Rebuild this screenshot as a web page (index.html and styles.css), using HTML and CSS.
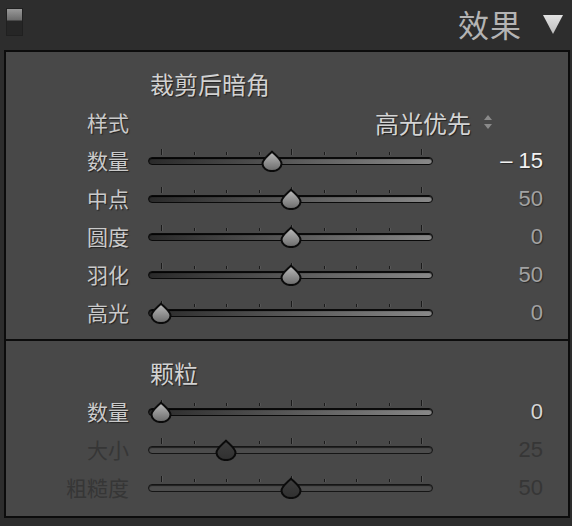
FILE: index.html
```html
<!DOCTYPE html>
<html lang="zh">
<head>
<meta charset="utf-8">
<link rel="stylesheet" href="styles.css">
</head>
<body>
<header class="hdr">
  <div class="toggle"></div>
  <div class="hdr-right">
    <span class="hdr-title">效果</span>
    <svg class="hdr-tri" width="22" height="22" viewBox="0 0 22 22"><defs><linearGradient id="tg" x1="0" y1="0" x2="0" y2="1"><stop offset="0" stop-color="#e2e2e2"/><stop offset="1" stop-color="#bdbdbd"/></linearGradient></defs><polygon points="1,2 21,2 11,21" fill="url(#tg)"/></svg>
  </div>
</header>

<svg width="0" height="0" class="defs">
  <defs>
    <linearGradient id="thumbOn" x1="0" y1="0" x2="0" y2="1"><stop offset="0" stop-color="#bdbdbd"/><stop offset="1" stop-color="#6a6a6a"/></linearGradient>
    <linearGradient id="thumbOff" x1="0" y1="0" x2="0" y2="1"><stop offset="0" stop-color="#3e3e3e"/><stop offset="1" stop-color="#303030"/></linearGradient>
    <symbol id="thumb" viewBox="0 0 24 22"><path d="M12 1.5 C13.5 3.8 21.5 9 21.5 13.8 A9.5 7.3 0 0 1 2.5 13.8 C2.5 9 10.5 3.8 12 1.5 Z" stroke="#0b0b0b" stroke-width="2" stroke-linejoin="round"/></symbol>
  </defs>
</svg>

<main class="panel">
  <section class="sec sec-vignette">
    <div class="sec-title">裁剪后暗角</div>
    <div class="row">
      <span class="lbl">样式</span>
      <span class="option">高光优先
        <svg class="updown" width="10" height="18" viewBox="0 0 10 18"><polygon points="5,2 9,7 1,7" fill="#8a8a8a"/><polygon points="1,11 9,11 5,16" fill="#8a8a8a"/></svg>
      </span>
    </div>
    <div class="row">
      <span class="lbl">数量</span>
      <div class="slider">
        <div class="ticks"><i class="t big"></i><i class="t"></i><i class="t"></i><i class="t"></i><i class="t big"></i><i class="t"></i><i class="t"></i><i class="t"></i><i class="t big"></i></div>
        <div class="track"></div>
        <div class="rail"><svg class="thumb on" style="left:42.5%"><use href="#thumb"/></svg></div>
      </div>
      <span class="val hot">– 15</span>
    </div>
    <div class="row">
      <span class="lbl">中点</span>
      <div class="slider">
        <div class="ticks"><i class="t big"></i><i class="t"></i><i class="t"></i><i class="t"></i><i class="t big"></i><i class="t"></i><i class="t"></i><i class="t"></i><i class="t big"></i></div>
        <div class="track"></div>
        <div class="rail"><svg class="thumb on" style="left:50%"><use href="#thumb"/></svg></div>
      </div>
      <span class="val">50</span>
    </div>
    <div class="row">
      <span class="lbl">圆度</span>
      <div class="slider">
        <div class="ticks"><i class="t big"></i><i class="t"></i><i class="t"></i><i class="t"></i><i class="t big"></i><i class="t"></i><i class="t"></i><i class="t"></i><i class="t big"></i></div>
        <div class="track"></div>
        <div class="rail"><svg class="thumb on" style="left:50%"><use href="#thumb"/></svg></div>
      </div>
      <span class="val">0</span>
    </div>
    <div class="row">
      <span class="lbl">羽化</span>
      <div class="slider">
        <div class="ticks"><i class="t big"></i><i class="t"></i><i class="t"></i><i class="t"></i><i class="t big"></i><i class="t"></i><i class="t"></i><i class="t"></i><i class="t big"></i></div>
        <div class="track"></div>
        <div class="rail"><svg class="thumb on" style="left:50%"><use href="#thumb"/></svg></div>
      </div>
      <span class="val">50</span>
    </div>
    <div class="row">
      <span class="lbl">高光</span>
      <div class="slider">
        <div class="ticks"><i class="t big"></i><i class="t"></i><i class="t"></i><i class="t"></i><i class="t big"></i><i class="t"></i><i class="t"></i><i class="t"></i><i class="t big"></i></div>
        <div class="track"></div>
        <div class="rail"><svg class="thumb on" style="left:0%"><use href="#thumb"/></svg></div>
      </div>
      <span class="val">0</span>
    </div>
  </section>

  <section class="sec sec-grain">
    <div class="sec-title">颗粒</div>
    <div class="row">
      <span class="lbl">数量</span>
      <div class="slider">
        <div class="ticks"><i class="t big"></i><i class="t"></i><i class="t"></i><i class="t"></i><i class="t big"></i><i class="t"></i><i class="t"></i><i class="t"></i><i class="t big"></i></div>
        <div class="track"></div>
        <div class="rail"><svg class="thumb on" style="left:0%"><use href="#thumb"/></svg></div>
      </div>
      <span class="val lit">0</span>
    </div>
    <div class="row disabled">
      <span class="lbl">大小</span>
      <div class="slider">
        <div class="ticks"><i class="t big"></i><i class="t"></i><i class="t"></i><i class="t"></i><i class="t big"></i><i class="t"></i><i class="t"></i><i class="t"></i><i class="t big"></i></div>
        <div class="track"></div>
        <div class="rail"><svg class="thumb off" style="left:25%"><use href="#thumb"/></svg></div>
      </div>
      <span class="val">25</span>
    </div>
    <div class="row disabled">
      <span class="lbl">粗糙度</span>
      <div class="slider">
        <div class="ticks"><i class="t big"></i><i class="t"></i><i class="t"></i><i class="t"></i><i class="t big"></i><i class="t"></i><i class="t"></i><i class="t"></i><i class="t big"></i></div>
        <div class="track"></div>
        <div class="rail"><svg class="thumb off" style="left:50%"><use href="#thumb"/></svg></div>
      </div>
      <span class="val">50</span>
    </div>
  </section>
</main>
</body>
</html>
```

FILE: styles.css
```css
html, body {
  margin: 0;
  padding: 0;
}
body {
  width: 572px;
  height: 526px;
  background: #2d2d2d;
  font-family: "Noto Sans CJK SC", "Noto Sans", sans-serif;
  overflow: hidden;
}
.defs {
  position: absolute;
}
.hdr {
  height: 50px;
  display: flex;
  align-items: flex-start;
  justify-content: space-between;
}
.toggle {
  margin: 8px 0 0 6px;
  width: 15px;
  height: 26px;
  border: 1px solid #202020;
  background: linear-gradient(to bottom, #999 0, #6c6c6c 11px, #262626 12px, #262626 100%);
}
.hdr-right {
  display: flex;
  align-items: center;
  height: 50px;
  margin-top: -2px;
}
.hdr-title {
  font-size: 31px;
  color: #b4b4b4;
  line-height: 1;
  letter-spacing: 1px;
}
.hdr-tri {
  margin: 2px 8px 0 20px;
}
.panel {
  margin: 0 2px 0 4px;
  border: 2px solid #0c0c0c;
  background: #484848;
  height: 468px;
  box-sizing: border-box;
  display: flex;
  flex-direction: column;
}
.sec-vignette {
  padding: 13px 0 8px;
  border-bottom: 2px solid #0c0c0c;
}
.sec-grain {
  padding: 13px 0 0;
}
.sec-title {
  padding-left: 144px;
  height: 38px;
  line-height: 38px;
  font-size: 24px;
  color: #d2d2d2;
  text-shadow: 1px 1px 1px rgba(0, 0, 0, 0.55);
}
.row {
  display: grid;
  grid-template-columns: 123px 285px 91px;
  column-gap: 19px;
  height: 38px;
  align-items: center;
}
.lbl {
  text-align: right;
  font-size: 21px;
  color: #cacaca;
  text-shadow: 1px 1px 1px rgba(0, 0, 0, 0.55);
  line-height: 38px;
}
.option {
  grid-column: 2 / 4;
  justify-self: end;
  display: flex;
  align-items: center;
  font-size: 24px;
  color: #d4d4d4;
  text-shadow: 1px 1px 1px rgba(0, 0, 0, 0.55);
  margin-right: 50px;
}
.updown {
  margin-left: 12px;
}
.val {
  text-align: right;
  font-family: "Liberation Sans", Arial, sans-serif;
  font-size: 22px;
  padding-top: 2px;
  color: #a2a2a2;
  text-shadow: 1px 1px 1px rgba(0, 0, 0, 0.45);
}
.val.hot {
  color: #f2f2f2;
}
.val.lit {
  color: #d6d6d6;
}
.slider {
  position: relative;
  height: 38px;
}
.ticks {
  position: absolute;
  left: 13px;
  right: 11px;
  top: 8px;
  height: 6px;
  display: flex;
  justify-content: space-between;
  align-items: flex-end;
}
.t {
  display: block;
  width: 1px;
  height: 3px;
  background: #1a1a1a;
  box-shadow: 1px 0 0 rgba(255, 255, 255, 0.08);
}
.t.big {
  height: 6px;
}
.track {
  position: absolute;
  left: 0;
  right: 0;
  top: 16px;
  height: 8px;
  box-sizing: border-box;
  border: 1px solid #0a0a0a;
  border-radius: 4px;
  background: linear-gradient(to right, #2a2a2a, #545454 45%, #888888);
  box-shadow: inset 0 1px 1px #000;
}
.rail {
  position: absolute;
  left: 13px;
  right: 12px;
  top: 0;
  height: 38px;
}
.thumb {
  position: absolute;
  top: 9px;
  width: 24px;
  height: 22px;
  transform: translateX(-50%);
  overflow: visible;
}
.thumb.on {
  fill: url(#thumbOn);
}
.thumb.off {
  fill: url(#thumbOff);
}
.disabled .lbl,
.disabled .val {
  color: #363636;
  text-shadow: none;
}
.disabled .track {
  background: #4c4c4c;
  border-color: #151515;
  box-shadow: inset 0 1px 1px rgba(0, 0, 0, 0.6);
}
```
